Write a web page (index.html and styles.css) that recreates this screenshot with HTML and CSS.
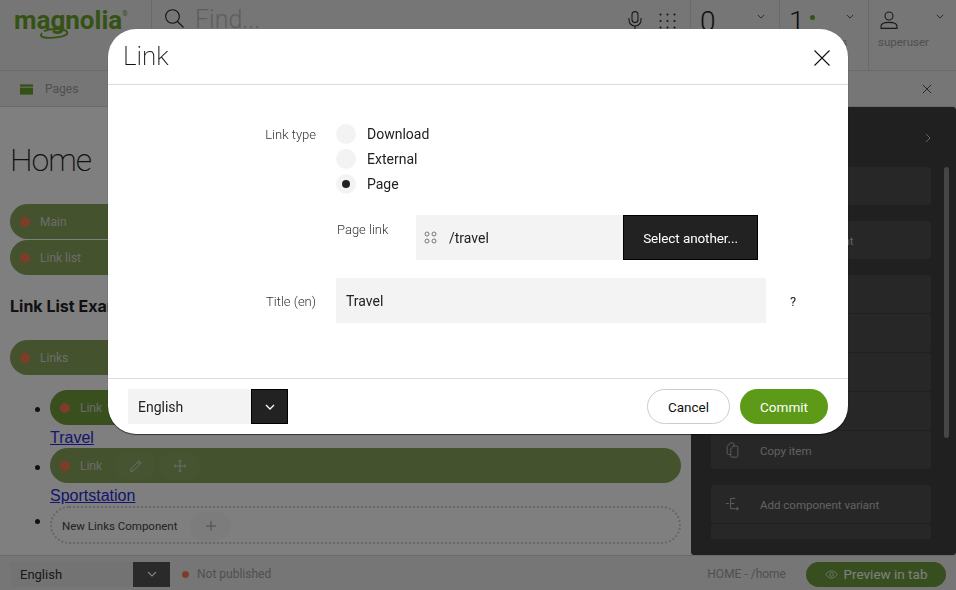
FILE: index.html
```html
<!DOCTYPE html>
<html lang="en">
<head>
<meta charset="utf-8">
<title>Link</title>
<link rel="stylesheet" href="styles.css">
</head>
<body>
<div class="app">
  <header class="topbar">
    <div class="logo-cell"><span class="logo">magnolia</span><sup class="reg">®</sup>
      <svg class="logo-swirl" viewBox="0 0 32 11"><path d="M5 3C12 0 27 0 29 4S20 10 11 10 1 8 3 5"/></svg>
    </div>
    <div class="search">
      <svg class="search-icon" viewBox="0 0 19 19"><circle cx="7.500" cy="7.500" r="6.800"/><path d="M12.500 12.500L18.500 18.500"/></svg>
      <span class="find">Find...</span>
      <svg class="mic" viewBox="0 0 14 18"><rect x="4" y=".6" width="6" height="11" rx="3"/><path d="M1 7v2a6 6 0 0 0 12 0V7M7 15v3"/></svg>
      <svg class="dots" viewBox="0 0 17 16"><circle cx="1.500" cy="1.500" r="1"/><circle cx="8.500" cy="1.500" r="1"/><circle cx="15.500" cy="1.500" r="1"/><circle cx="1.500" cy="8" r="1"/><circle cx="8.500" cy="8" r="1"/><circle cx="15.500" cy="8" r="1"/><circle cx="1.500" cy="14.500" r="1"/><circle cx="8.500" cy="14.500" r="1"/><circle cx="15.500" cy="14.500" r="1"/></svg>
    </div>
    <div class="cell"><span class="count">0</span><svg class="caret" viewBox="0 0 10 6"><path d="M1 1l4 4 4-4"/></svg></div>
    <div class="cell"><span class="count">1</span><span class="dot-green"></span><span class="cell-label tasks">Tasks</span><svg class="caret" viewBox="0 0 10 6"><path d="M1 1l4 4 4-4"/></svg></div>
    <div class="cell user">
      <svg class="user-icon" viewBox="0 0 18 18"><circle cx="9" cy="5" r="4"/><path d="M1 17.400v-2c0-2.500 3.500-4 8-4s8 1.500 8 4v2z"/></svg>
      <span class="cell-label">superuser</span>
      <svg class="caret" viewBox="0 0 10 6"><path d="M1 1l4 4 4-4"/></svg>
    </div>
  </header>
  <div class="tabbar">
    <svg class="pages-icon" viewBox="0 0 14 11"><rect width="14" height="2.500"/><rect y="3.500" width="14" height="7.500"/></svg>
    <span class="tab-label">Pages</span>
    <svg class="tab-close" viewBox="0 0 12 12"><path d="M1 1l10 10M11 1L1 11"/></svg>
  </div>
  <main class="workspace">
    <section class="page">
      <h1 class="home">Home</h1>
      <div class="pill"><i class="red"></i>Main</div>
      <div class="pill"><i class="red"></i>Link list</div>
      <h2 class="example">Link List Example</h2>
      <div class="pill"><i class="red"></i>Links</div>
      <ul class="links">
        <li>
          <div class="pill active"><i class="red"></i>Link</div>
          <a class="page-link" href="#">Travel</a>
        </li>
        <li>
          <div class="pill"><i class="red"></i>Link
            <span class="tool"><svg viewBox="0 0 14 14"><path d="M1.500 12.500l.8-3L10 1.800l2.200 2.200-7.700 7.700zM8.800 3l2.200 2.200"/></svg></span>
            <span class="tool"><svg viewBox="0 0 14 14"><path d="M7 1v12M1 7h12M5.500 2.500L7 1l1.500 1.500M5.500 11.500L7 13l1.500-1.500M2.500 5.500L1 7l1.500 1.500M11.500 5.500L13 7l-1.500 1.500"/></svg></span>
          </div>
          <a class="page-link" href="#">Sportstation</a>
        </li>
        <li>
          <div class="new-pill">New Links Component<span class="plus-tool"><svg viewBox="0 0 12 12"><path d="M6 1v10M1 6h10"/></svg></span></div>
        </li>
      </ul>
    </section>
    <aside class="panel">
      <div class="panel-head"><svg class="panel-chevron" viewBox="0 0 6 10"><path d="M1 1l4 4-4 4"/></svg></div>
      <div class="panel-body">
        <div class="actions">
          <div class="group">
            <div class="action"><span class="action-label">Edit item</span></div>
          </div>
          <div class="group">
            <div class="action"><span class="action-label">Delete component</span></div>
          </div>
          <div class="group">
            <div class="action"><span class="action-label">Move item</span></div>
            <div class="action"><span class="action-label">Delete item</span></div>
            <div class="action"><span class="action-label">Duplicate item</span></div>
            <div class="action"><span class="action-label">Cut item</span></div>
            <div class="action">
              <svg class="action-icon" viewBox="0 0 16 18"><path d="M6 8l3-3.500h3.500A1.500 1.500 0 0 1 14 6v9.500a1.500 1.500 0 0 1-1.500 1.500h-5A1.500 1.500 0 0 1 6 15.500zM6 14H3.500A1.500 1.500 0 0 1 2 12.500V5l3.500-4H8a1.500 1.500 0 0 1 1.500 1.500V4.500"/></svg>
              <span class="action-label">Copy item</span>
            </div>
          </div>
          <div class="group">
            <div class="action">
              <svg class="action-icon" viewBox="0 0 16 16"><path d="M6 2h5M6 2v11h5M6 7.500h4M1 7.500h3M13 11v4M11 13h4"/></svg>
              <span class="action-label">Add component variant</span>
            </div>
            <div class="action"><span class="action-label">Show versions</span></div>
          </div>
        </div>
        <div class="scrollbar"></div>
      </div>
    </aside>
  </main>
  <footer class="statusbar">
    <div class="status-lang"><span class="status-lang-text">English</span><span class="status-lang-btn"><svg viewBox="0 0 10 6"><path d="M1 1l4 4 4-4"/></svg></span></div>
    <i class="red status-dot"></i><span class="status-text">Not published</span>
    <span class="crumb">HOME - /home</span>
    <span class="preview"><svg viewBox="0 0 18 12"><path d="M1 6c2-3 5-5 8-5s6 2 8 5c-2 3-5 5-8 5S3 9 1 6z"/><circle cx="9" cy="6" r="2.500"/></svg>Preview in tab</span>
  </footer>
</div>

<div class="overlay">
  <div class="dialog">
    <div class="dialog-head">
      <span class="dialog-title">Link</span>
      <svg class="dialog-close" viewBox="0 0 16 16"><path d="M.5.500l15 15M15.500.500l-15 15"/></svg>
    </div>
    <div class="dialog-body">
      <div class="row row-type">
        <div class="label">Link type</div>
        <div class="field-col">
          <div class="radios">
            <div class="radio"><span class="radio-circle"></span>Download</div>
            <div class="radio"><span class="radio-circle"></span>External</div>
            <div class="radio"><span class="radio-circle checked"></span>Page</div>
          </div>
          <div class="page-row">
            <div class="sublabel">Page link</div>
            <div class="page-input">
              <svg class="node-icon" viewBox="0 0 13 13"><circle cx="3" cy="3" r="2"/><circle cx="10" cy="3" r="2"/><circle cx="3" cy="10" r="2"/><circle cx="10" cy="10" r="2"/></svg>
              <span class="page-value">/travel</span>
            </div>
            <div class="select-btn">Select another...</div>
          </div>
        </div>
      </div>
      <div class="row row-title">
        <div class="label">Title (en)</div>
        <div class="title-input">Travel</div>
        <div class="help">?</div>
      </div>
    </div>
    <div class="dialog-foot">
      <div class="lang"><span class="lang-text">English</span><span class="lang-btn"><svg viewBox="0 0 10 6"><path d="M1 1l4 4 4-4"/></svg></span></div>
      <div class="foot-actions">
        <div class="btn cancel">Cancel</div>
        <div class="btn commit">Commit</div>
      </div>
    </div>
  </div>
</div>
</body>
</html>
```
FILE: styles.css
```css
* { box-sizing: border-box; }
html, body { margin: 0; padding: 0; height: 100%; overflow: hidden; }
body { font-family: Roboto, "Liberation Sans", sans-serif; color: #222; background: #fff; }
svg { display: block; fill: none; stroke: currentColor; }

.app { width: 956px; height: 590px; display: flex; flex-direction: column; background: #f4f4f4; }

/* Top bar */
.topbar { height: 71px; display: flex; flex: none; background: #ececec; border-bottom: 1px solid #d4d4d4; }
.logo-cell { width: 152px; flex: none; padding: 3px 0 0 14px; border-right: 1px solid #d4d4d4; display: flex; align-items: flex-start; position: relative; }
.logo { font-family: Roboto, sans-serif; font-weight: 700; font-size: 26px; line-height: 34px; color: #6aa52a; }
.reg { font-size: 7px; line-height: 22px; color: #6aa52a; margin: 0; }
.logo-swirl { position: absolute; left: 39px; top: 28px; width: 31px; height: 11px; color: #6aa52a; stroke-width: 2; }
.search { flex: 1; display: flex; align-items: flex-start; padding: 9px 0 0 13px; }
.search-icon { width: 19px; height: 19px; stroke-width: 1.100; color: #222; margin-right: 11px; }
.find { font-size: 25px; font-weight: 300; line-height: 20px; color: #bbb; flex: 1; padding-top: 1px; }
.mic { width: 14px; height: 18px; stroke-width: 1.100; color: #333; margin: 2px 17px 0 0; }
.dots { width: 17px; height: 16px; margin: 4px 14px 0 0; }
.dots circle { fill: #222; stroke: none; }
.cell { width: 89px; flex: none; position: relative; border-left: 1px solid #d4d4d4; padding: 7px 0 0 9px; display: flex; align-items: flex-start; }
.count { font-size: 28px; font-weight: 300; line-height: 30px; color: #222; }
.dot-green { width: 5px; height: 5px; border-radius: 50%; background: #6aa52a; margin: 8px 0 0 5px; }
.caret { width: 8px; height: 5px; stroke-width: 1; color: #333; position: absolute; right: 14px; top: 14px; }
.cell-label { position: absolute; left: 9px; top: 35px; font-size: 11.500px; line-height: 14px; color: #a0a0a0; }
.tasks { left: 37px; }
.user-icon { width: 18px; height: 18px; stroke-width: 1.100; color: #333; }
.user { padding: 11px 0 0 11px; width: 88px; }
.user .caret { right: 12px; }

/* Tab bar */
.tabbar { height: 36px; flex: none; display: flex; align-items: center; padding: 0 24px 0 20px; background: #ececec; border-bottom: 1px solid #d4d4d4; }
.pages-icon { width: 13px; height: 11px; fill: #6aa52a; stroke: none; margin-top: 1px; }
.tab-label { flex: 1; margin-left: 12px; font-size: 12px; color: #a0a0a0; }
.tab-close { width: 10px; height: 10px; stroke-width: 1; color: #333; }

/* Workspace */
.workspace { flex: 1; min-height: 0; display: flex; background: #fff; }
.page { flex: 1; min-width: 0; padding: 33px 10px 0 10px; }
.home { margin: 0 0 24px; font-size: 32px; line-height: 40px; font-weight: 200; letter-spacing: -1px; color: #222; }
.pill { height: 35px; margin-bottom: 1px; border-radius: 18px; background: #88a45c; padding-left: 10px; display: flex; align-items: center; font-size: 12px; color: #d8d8d8; }
.red { width: 10px; height: 10px; border-radius: 50%; background: #ff7a52; margin-right: 10px; flex: none; }
.example { margin: 22px 0 24px; font-family: Inter, sans-serif; font-size: 16px; line-height: 19px; font-weight: 700; color: #222; }
.links { margin: 15px 0 0; padding: 0 0 0 40px; list-style: none; font-family: "Liberation Sans", sans-serif; font-size: 16px; }
.links li { position: relative; }
.links li::before { content: ""; position: absolute; left: -15px; top: 17px; width: 5px; height: 5px; border-radius: 50%; background: #222; }
.links li:last-child::before { top: 13px; }
.links .pill { margin: 0; }
.links .active { background: #729f3a; }
.page-link { display: block; height: 23px; line-height: 25px; color: #2a2ae0; text-decoration: underline; }
.tool { width: 41px; height: 28px; border-radius: 14px; background: rgba(255,255,255,.06); margin-left: 3px; display: flex; align-items: center; justify-content: center; color: #d8d8d8; }
.tool:first-of-type { margin-left: 13px; }
.tool svg { width: 14px; height: 14px; stroke-width: 1; }
.new-pill { height: 38px; border: 2px dotted #ccc; border-radius: 19px; padding: 1px 0 0 10px; display: flex; align-items: center; font-family: Roboto, sans-serif; font-size: 11.500px; color: #444; }
.plus-tool { width: 41px; height: 28px; border-radius: 14px; background: #f8f8f8; margin-left: 13px; display: flex; align-items: center; justify-content: center; color: #999; }
.plus-tool svg { width: 12px; height: 12px; stroke-width: 1; }

/* Right panel */
.panel { width: 265px; flex: none; background: #404040; display: flex; flex-direction: column; border-radius: 3px; padding-bottom: 16px; overflow: hidden; }
.panel-head { height: 60px; flex: none; padding: 26px 25px 0 0; display: flex; justify-content: flex-end; }
.panel-chevron { width: 6px; height: 10px; color: #ccc; stroke-width: 1; }
.panel-body { flex: 1; min-height: 0; display: flex; padding: 0 7px 0 20px; overflow: hidden; }
.actions { width: 220px; flex: none; }
.group { display: flex; flex-direction: column; gap: 1px; margin-bottom: 16px; }
.action { height: 38px; flex: none; border-radius: 3px; background: #4e4e4e; display: flex; align-items: center; padding: 1px 0 0 49px; position: relative; font-size: 11.500px; color: #c4c4c4; }
.action-icon { position: absolute; left: 14px; top: 11px; width: 15px; height: 16px; stroke-width: 1; color: #c4c4c4; }
.scrollbar { width: 5px; height: 271px; margin-left: 13px; border-radius: 3px; background: #8c8c8c; flex: none; }

/* Status bar */
.statusbar { height: 35px; flex: none; display: flex; align-items: center; padding: 2px 10px 0 10px; background: #ececec; border-top: 1px solid #d4d4d4; }
.status-lang { width: 160px; height: 25px; display: flex; background: #e6e6e6; }
.status-lang-text { flex: 1; padding-left: 10px; font-size: 13px; line-height: 25px; color: #333; }
.status-lang-btn { width: 37px; background: #555; color: #fff; display: flex; align-items: center; justify-content: center; }
.status-lang-btn svg { width: 10px; height: 6px; stroke-width: 1.200; }
.status-dot { width: 7px; height: 7px; margin: 0 8px 0 12px; }
.status-text { flex: 1; font-size: 12px; color: #a0a0a0; }
.crumb { font-size: 12px; color: #a0a0a0; margin-right: 20px; }
.preview { width: 140px; height: 25px; border-radius: 13px; background: #6f9c3c; color: #fff; font-size: 13.500px; display: flex; align-items: center; justify-content: center; gap: 6px; }
.preview svg { width: 13px; height: 9px; stroke-width: 1; }

/* Overlay and dialog */
.overlay { position: fixed; inset: 0; background: rgba(0,0,0,.5); padding: 29px 0 0 108px; }
.dialog { width: 740px; height: 405px; background: #fff; border-radius: 28px; box-shadow: 0 1px 1px rgba(0,0,0,.6); display: flex; flex-direction: column; overflow: hidden; }
.dialog-head { height: 56px; flex: none; display: flex; align-items: center; justify-content: space-between; padding: 0 18px 0 15px; border-bottom: 1px solid #dcdcdc; }
.dialog-title { font-size: 26px; font-weight: 200; color: #111; line-height: 54px; margin-bottom: 2px; }
.dialog-close { width: 16px; height: 16px; stroke-width: 1.100; color: #111; margin-top: 2px; }
.dialog-body { flex: 1; min-height: 0; padding-top: 40px; }
.row { display: flex; align-items: flex-start; }
.label { width: 208px; flex: none; text-align: right; font-size: 13px; font-weight: 300; line-height: 22px; color: #333; }
.row-type { margin-top: -1px; }
.field-col { margin-left: 20px; }
.radios { display: flex; flex-direction: column; gap: 5px; }
.radio { height: 20px; display: flex; align-items: center; font-size: 14px; color: #222; }
.radio-circle { width: 20px; height: 20px; border-radius: 50%; background: #f3f3f3; margin-right: 11px; display: flex; align-items: center; justify-content: center; }
.checked::after { content: ""; width: 8px; height: 8px; border-radius: 50%; background: #222; }
.page-row { display: flex; margin-top: 21px; }
.sublabel { width: 80px; flex: none; padding-left: 1px; font-size: 13px; font-weight: 300; line-height: 30px; color: #333; }
.page-input { width: 207px; height: 45px; flex: none; background: #f3f3f3; display: flex; align-items: center; padding-left: 8px; font-size: 14px; color: #222; }
.page-value { padding-top: 1px; }
.node-icon { width: 13px; height: 13px; margin-right: 12px; color: #777; stroke-width: 1; }
.select-btn { width: 135px; height: 45px; flex: none; background: #222; border: 1px solid #000; color: #fff; font-size: 13.500px; letter-spacing: -.1px; display: flex; align-items: center; justify-content: center; }
.row-title { margin-top: 18px; }
.row-title .label { line-height: 47px; }
.title-input { width: 430px; height: 45px; margin-left: 20px; flex: none; background: #f3f3f3; padding-left: 10px; font-size: 14px; line-height: 47px; color: #222; }
.help { margin-left: 24px; font-size: 13px; line-height: 47px; color: #222; }
.dialog-foot { height: 56px; flex: none; display: flex; align-items: flex-start; justify-content: space-between; padding: 10px 20px 0; border-top: 1px solid #dcdcdc; }
.lang { width: 160px; height: 35px; display: flex; background: #f3f3f3; }
.lang-text { flex: 1; padding: 1px 0 0 10px; font-size: 14px; line-height: 35px; color: #222; }
.lang-btn { width: 37px; background: #222; border: 1px solid #000; color: #fff; display: flex; align-items: center; justify-content: center; }
.lang-btn svg { width: 10px; height: 6px; stroke-width: 1.300; }
.foot-actions { display: flex; gap: 10px; }
.btn { height: 35px; border-radius: 18px; display: flex; align-items: center; justify-content: center; font-size: 13.500px; }
.cancel { width: 83px; background: #fff; border: 1px solid #ccc; color: #111; }
.commit { width: 88px; background: #5c9a18; color: #fff; }
```
